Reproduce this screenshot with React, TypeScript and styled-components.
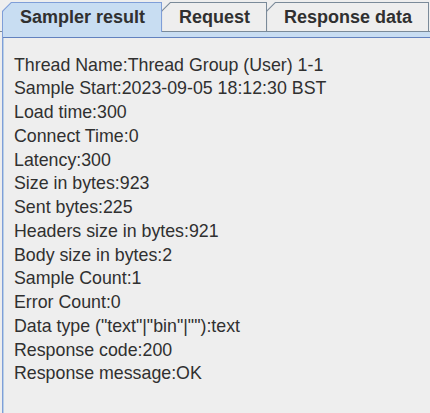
import React, { useState } from "react";
import styled, { createGlobalStyle } from "styled-components";

const GlobalStyle = createGlobalStyle`
  html, body {
    margin: 0;
    padding: 0;
    background: #eeeeee;
  }
`;

const TAB_BG = "#c8ddf2";
const LINE = "#7a8a99";
const FRAME = "#6382bf";

const tabs = ["Sampler result", "Request", "Response data"];

const lines = [
  "Thread Name:Thread Group (User) 1-1",
  "Sample Start:2023-09-05 18:12:30 BST",
  "Load time:300",
  "Connect Time:0",
  "Latency:300",
  "Size in bytes:923",
  "Sent bytes:225",
  "Headers size in bytes:921",
  "Body size in bytes:2",
  "Sample Count:1",
  "Error Count:0",
  'Data type ("text"|"bin"|""):text',
  "Response code:200",
  "Response message:OK",
];

const App: React.FC = () => {
  const [active, setActive] = useState(0);

  return (
    <>
      <GlobalStyle />
      <Pane>
        <TabRow>
          {tabs.map((t, i) => (
            <Tab key={t} selected={i === active} onClick={() => setActive(i)}>
              <TabFace selected={i === active}>{t}</TabFace>
            </Tab>
          ))}
        </TabRow>
        <Content>
          <Band />
          <Details>
            {lines.map((l) => (
              <Line key={l}>{l}</Line>
            ))}
          </Details>
        </Content>
      </Pane>
    </>
  );
};

const Pane = styled.div`
  width: 430px;
  height: 413px;
  background: #eeeeee;
  display: flex;
  flex-direction: column;
  overflow: hidden;
  font-family: "Liberation Sans", Arial, sans-serif;
  color: #303030;
`;

const TabRow = styled.div`
  display: flex;
  align-items: flex-end;
  height: 29px;
  padding: 2px 0 0 2px;
  border-bottom: 1px solid ${LINE};
`;

const Tab = styled.div<{ selected: boolean }>`
  position: relative;
  height: ${(p) => (p.selected ? "30px" : "29px")};
  margin-bottom: ${(p) => (p.selected ? "-1px" : "0")};
  margin-left: ${(p) => (p.selected ? "0" : "-1px")};
  z-index: ${(p) => (p.selected ? 2 : 1)};
  background: ${(p) => (p.selected ? "#7f9ed8" : LINE)};
  clip-path: polygon(0 9px, 9px 0, 100% 0, 100% 100%, 0 100%);
  padding: 1px 1px 0 1px;
  box-sizing: border-box;
  cursor: default;
`;

const TabFace = styled.div<{ selected: boolean }>`
  height: 100%;
  box-sizing: border-box;
  background: ${(p) => (p.selected ? TAB_BG : "#eeeeee")};
  clip-path: polygon(0 8.5px, 8.5px 0, 100% 0, 100% 100%, 0 100%);
  padding: 1px 16px 0 17px;
  font-weight: bold;
  font-size: 18px;
  line-height: 27px;
  white-space: nowrap;
`;

const Content = styled.div`
  flex: 1;
  margin-left: 2px;
  border-left: 1px solid #7f9ed8;
  display: flex;
  flex-direction: column;
`;

const Band = styled.div`
  height: 5px;
  background: ${TAB_BG};
  border-bottom: 1px solid ${FRAME};
`;

const Details = styled.div`
  padding: 15.5px 0 0 10px;
  border-left: 1px solid #b8cfe5;
  flex: 1;
`;

const Line = styled.div`
  font-size: 17.8px;
  line-height: 23.75px;
  white-space: nowrap;
`;

export default App;
